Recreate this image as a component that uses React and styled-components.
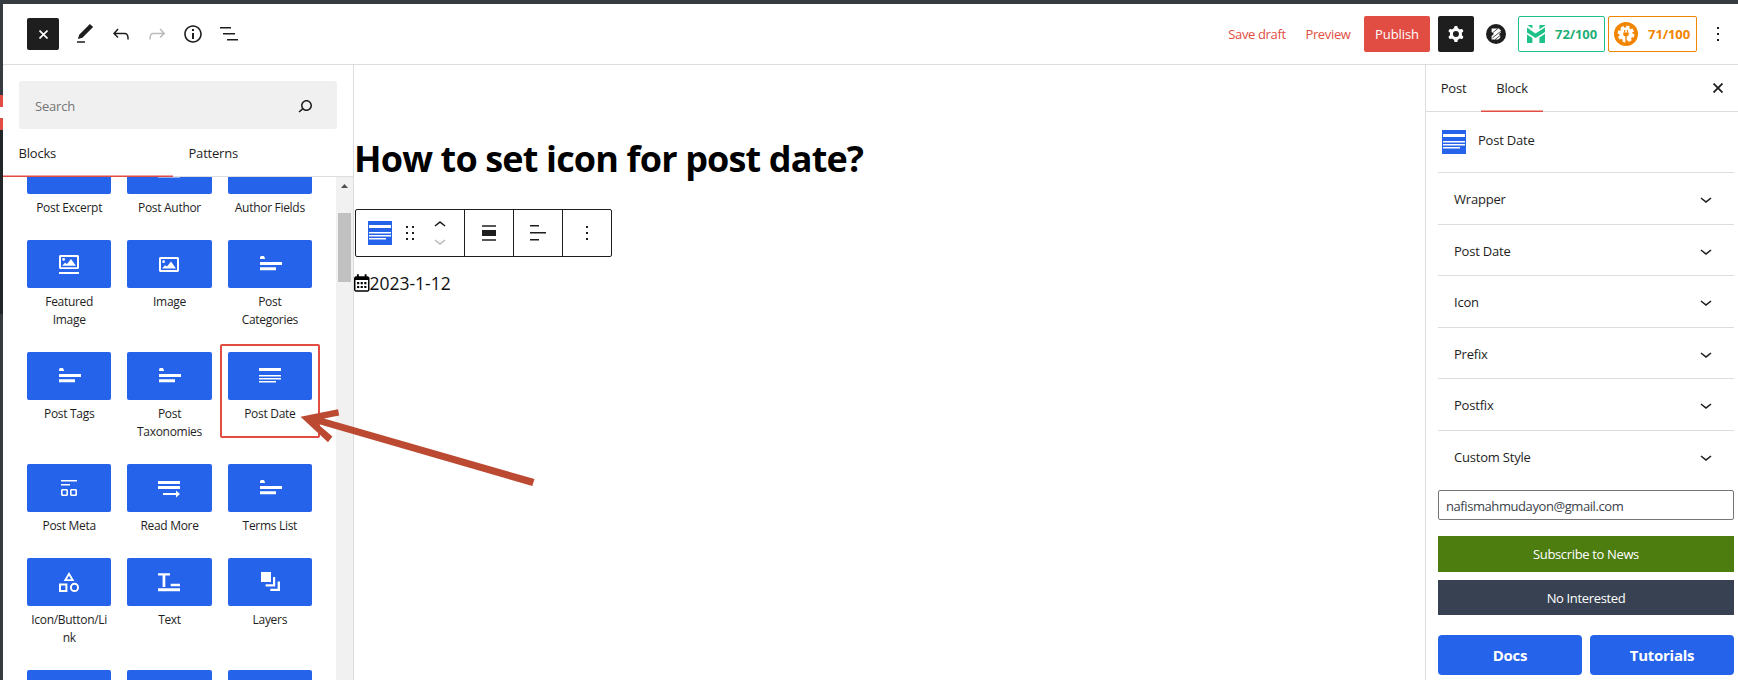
import React from "react";
import styled, { createGlobalStyle, css } from "styled-components";

const RED = "#e14d43";
const BLUE = "#2563eb";
const INK = "#1e1e1e";

const Global = createGlobalStyle`
  * { box-sizing: border-box; }
  body { margin: 0; background: #fff; overflow: hidden; }
  button, input { font: inherit; color: inherit; letter-spacing: inherit; border: 0; padding: 0; background: none; }
`;

const Screen = styled.div`
  position: relative;
  display: grid;
  grid-template: 4px 676px / 3px minmax(0, 1fr);
  width: 1738px;
  height: 680px;
  overflow: hidden;
  font: 13px/18px "Open Sans", "Noto Sans", sans-serif;
  letter-spacing: -0.2px;
  color: ${INK};
`;

const TopStrip = styled.div`
  grid-column: 1 / 3;
  background: #363b3f;
`;

const AdminStrip = styled.div`
  display: flex;
  flex-direction: column;
`;

const StripPart = styled.div`
  height: ${(p) => p.$h}px;
  background: ${(p) => p.$bg};
`;

const Editor = styled.div`
  display: flex;
  flex-direction: column;
  min-width: 0;
`;

const Header = styled.header`
  display: flex;
  justify-content: space-between;
  height: 61px;
  padding: 12px 5px 12px 24px;
  border-bottom: 1px solid #ddd;
`;

const HeaderGroup = styled.div`
  display: flex;
  align-items: center;
  height: 36px;
`;

const InserterToggle = styled.button`
  display: grid;
  place-items: center;
  width: 32px;
  height: 32px;
  margin-right: 8px;
  border-radius: 2px;
  background: ${INK};
  color: #fff;
`;

const IconButton = styled.button`
  display: grid;
  place-items: center;
  width: ${(p) => p.$w || 36}px;
  height: 36px;
  color: ${(p) => (p.$off ? "#bbb" : INK)};
`;

const TextButton = styled.button`
  width: ${(p) => p.$w}px;
  height: 36px;
  margin-right: ${(p) => p.$gap}px;
  color: ${RED};
  letter-spacing: -0.35px;
  text-align: center;
  white-space: nowrap;
`;

const Publish = styled(TextButton)`
  border-radius: 2px;
  background: ${RED};
  color: #fff;
  letter-spacing: -0.1px;
`;

const SettingsButton = styled(IconButton)`
  border-radius: 2px;
  background: ${INK};
  color: #fff;
`;

const Score = styled.div`
  display: flex;
  align-items: center;
  justify-content: space-between;
  width: ${(p) => p.$w}px;
  height: 36px;
  margin-right: ${(p) => p.$mr}px;
  padding: 0 ${(p) => p.$pr}px 0 ${(p) => p.$pl}px;
  border: 1px solid ${(p) => p.$c};
  border-radius: 2px;
  color: ${(p) => p.$text};
  font-weight: 700;
  letter-spacing: -0.1px;
`;

const Body = styled.div`
  display: flex;
  flex: 1;
  min-height: 0;
`;

const Inserter = styled.aside`
  display: flex;
  flex-direction: column;
  width: 351px;
  border-right: 1px solid #ddd;
`;

const SearchBox = styled.label`
  display: flex;
  align-items: center;
  justify-content: space-between;
  height: 48px;
  margin: 16px 16px 0;
  padding: 1px 20px 0 16px;
  border-radius: 2px;
  background: #f0f0f0;

  input { width: 180px; outline: 0; }
  input::placeholder { color: #757575; opacity: 1; }
`;

const InserterTabs = styled.div`
  display: flex;
  height: 48px;
  border-bottom: 1px solid #ddd;
`;

const InserterTab = styled.button`
  width: ${(p) => (p.$active ? 170 : 180)}px;
  height: 48px;
  padding: 1px 16px 1px 15.5px;
  text-align: left;
  box-shadow: ${(p) => (p.$active ? `inset 0 -1.5px ${RED}` : "none")};
`;

const BlockScroll = styled.div`
  display: flex;
  flex: 1;
  min-height: 0;
  overflow: hidden;
`;

const BlockGrid = styled.div`
  display: grid;
  grid-template-columns: repeat(3, 1fr);
  grid-auto-rows: max-content;
  align-items: start;
  align-content: start;
  width: 301px;
  margin: -39px 16px 0;
`;

const BlockItem = styled.div`
  display: flex;
  flex-direction: column;
  padding: 8px 8px 15px;
  border-radius: 2px;
  ${(p) => p.$selected && css`box-shadow: inset 0 0 0 2px ${RED};`}
`;

const Tile = styled.div`
  display: grid;
  place-items: center;
  height: 48px;
  border-radius: 2px;
  background: ${BLUE};
  color: #fff;
`;

const TileLabel = styled.div`
  margin: 5px 0 0;
  padding: 0 3px;
  font-size: 12px;
  line-height: 18px;
  letter-spacing: -0.3px;
  text-align: center;
  overflow-wrap: anywhere;
`;

const ScrollTrack = styled.div`
  display: flex;
  flex-direction: column;
  align-items: center;
  width: 17px;
  background: #f1f1f1;
  color: #505050;
`;

const ScrollThumb = styled.div`
  width: 13px;
  height: 69px;
  margin-top: 24px;
  background: #c1c1c1;
`;

const ScrollArrow = styled.svg`
  margin-top: 7px;
`;

const Canvas = styled.main`
  flex: 1;
  padding: 69px 0 0 1px;
`;

const Title = styled.h1`
  margin: 0 0 0 -1px;
  font-size: 36px;
  line-height: 50px;
  font-weight: 700;
  letter-spacing: -0.85px;
  color: #000;
  white-space: nowrap;
`;

const Toolbar = styled.div`
  display: flex;
  width: 257px;
  height: 48px;
  margin-top: 25px;
  border: 1px solid ${INK};
  border-radius: 2px;
`;

const ToolGroup = styled.div`
  display: flex;
  align-items: center;
  justify-content: ${(p) => (p.$pl ? "flex-start" : "center")};
  width: ${(p) => p.$w}px;
  padding-left: ${(p) => p.$pl || 0}px;
  border-right: ${(p) => (p.$last ? 0 : 1)}px solid ${INK};
`;

const BlockIcon = styled.span`
  display: grid;
  place-items: center;
  width: 24px;
  height: 24px;
  background: ${BLUE};
  color: #fff;
`;

const Movers = styled.div`
  display: flex;
  flex-direction: column;
  width: 24px;
  align-items: center;

  svg { margin: -4px 0; }
  svg + svg { color: #bbb; }
`;

const DateLine = styled.div`
  display: flex;
  align-items: center;
  height: 28px;
  margin: 12px 0 0 -1px;
  font-size: 17.5px;
  letter-spacing: -0.02px;
  color: #111;
`;

const Sidebar = styled.aside`
  width: 313px;
  border-left: 1px solid #ddd;
`;

const SidebarTabs = styled.div`
  display: flex;
  align-items: center;
  height: 47px;
  border-bottom: 1px solid #ddd;
`;

const SidebarTab = styled.button`
  width: ${(p) => p.$w}px;
  height: 48px;
  padding-bottom: 1px;
  letter-spacing: -0.2px;
  box-shadow: ${(p) => (p.$active ? `inset 0 -1.5px ${RED}` : "none")};
`;

const SidebarClose = styled(IconButton)`
  margin-left: auto;
  margin-right: 2px;
`;

const BlockCard = styled.div`
  display: flex;
  gap: 12px;
  padding: 18px 16px;
  line-height: 20px;
`;

const Panels = styled.div`
  padding: 0 4px 0 12px;
`;

const Panel = styled.button`
  display: flex;
  align-items: center;
  justify-content: space-between;
  width: 296px;
  height: 51.6px;
  padding: 1.6px 16px 0;
  border-top: 1px solid #ddd;
  text-align: left;
`;

const Email = styled.input`
  display: block;
  width: 296px;
  height: 30px;
  margin: 8.4px 0 16px;
  && { padding: 2px 7px 0; border: 1px solid #757575; }
  border-radius: 2px;
  && { color: #3c434a; letter-spacing: -0.42px; }
`;

const WideButton = styled.button`
  display: block;
  width: 296px;
  height: ${(p) => p.$h}px;
  margin-bottom: ${(p) => p.$mb}px;
  && { padding-top: 1px; background: ${(p) => p.$bg}; color: #fff; letter-spacing: -0.35px; font-weight: 500; }
`;

const LinkRow = styled.div`
  display: flex;
  gap: 8px;
`;

const LinkButton = styled.button`
  flex: 1;
  height: 40px;
  border-radius: 4px;
  && { padding-top: 1px; background: ${BLUE}; color: #fff; font-size: 15px; font-weight: 700; letter-spacing: -0.25px; }
`;

const Pointer = styled.svg`
  position: absolute;
  left: 296px;
  top: 400px;
  pointer-events: none;
`;

const Svg = ({ d, size = 24, children }) => (
  <svg width={size} height={size} viewBox="0 0 24 24" fill="currentColor" fillRule="evenodd">
    {d ? <path d={d} /> : children}
  </svg>
);

const Cross = ({ size = 9 }) => (
  <svg width={size} height={size} viewBox="0 0 9 9" stroke="currentColor" strokeWidth="1.6">
    <path d="M.5.5l8 8M8.5.5l-8 8" />
  </svg>
);

const paths = {
  pencil: "M20.1 5.1L16.9 2 6.2 12.7l-1.3 4.4 4.5-1.3L20.1 5.1zM4 20.8h8v-1.5H4v1.5z",
  undo: "M18.3 11.7c-.6-.6-1.4-.9-2.3-.9H6.7l2.9-3.3-1.1-1-4.5 5L8.5 16l1-1-2.7-2.7H16c.5 0 .9.2 1.3.5 1 1 1 3.4 1 4.5v.3h1.5v-.2c0-1.5 0-4.3-1.5-5.7z",
  redo: "M15.6 6.5l-1.1 1 2.9 3.3H8c-.9 0-1.7.3-2.3.9-1.4 1.5-1.4 4.2-1.4 5.6v.2h1.5v-.3c0-1.1 0-3.5 1-4.5.3-.3.7-.5 1.3-.5h9.2L14.5 15l1.1 1.1 4.6-4.6-4.6-5z",
  info: "M12 3.2c-4.8 0-8.8 3.9-8.8 8.8 0 4.8 3.9 8.8 8.8 8.8 4.8 0 8.8-3.9 8.8-8.8 0-4.8-4-8.8-8.8-8.8zm0 16c-4 0-7.2-3.3-7.2-7.2C4.8 8 8 4.8 12 4.8s7.2 3.3 7.2 7.2c0 4-3.2 7.2-7.2 7.2zM11 17h2v-6h-2v6zm0-8h2V7h-2v2z",
  list: "M3 5h11v1.6H3zM6 11h12v1.6H6zM10 17h11v1.6H10z",
  search: "M13.5 6C10.5 6 8 8.5 8 11.5c0 1.1.3 2.1.9 3l-3.4 3 1 1.1 3.4-2.9c1 .9 2.2 1.4 3.6 1.4 3 0 5.5-2.5 5.5-5.5C19 8.5 16.5 6 13.5 6zm0 9.5c-2.2 0-4-1.8-4-4s1.8-4 4-4 4 1.8 4 4-1.8 4-4 4z",
  down: "M17.5 11.6L12 16l-5.5-4.4.9-1.2L12 14l4.5-3.6 1 1.2z",
  up: "M6.5 12.4L12 8l5.5 4.4-.9 1.2L12 10l-4.5 3.6-1-1.2z",
  cog: "M10.289 4.836A1 1 0 0111.275 4h1.306a1 1 0 01.987.836l.244 1.466c.787.26 1.503.679 2.108 1.218l1.393-.522a1 1 0 011.216.437l.653 1.13a1 1 0 01-.23 1.273l-1.148.944a6.025 6.025 0 010 2.435l1.149.946a1 1 0 01.23 1.272l-.653 1.13a1 1 0 01-1.216.437l-1.394-.522c-.605.54-1.32.958-2.108 1.218l-.244 1.466a1 1 0 01-.987.836h-1.306a1 1 0 01-.986-.836l-.244-1.466a5.995 5.995 0 01-2.108-1.218l-1.394.522a1 1 0 01-1.217-.436l-.653-1.131a1 1 0 01.23-1.272l1.149-.946a6.026 6.026 0 010-2.435l-1.148-.944a1 1 0 01-.23-1.272l.653-1.131a1 1 0 011.217-.437l1.393.522a5.994 5.994 0 012.108-1.218l.244-1.466zM14.929 12a3 3 0 11-6 0 3 3 0 016 0z",
  drag: "M8 7h2V5H8v2zm0 6h2v-2H8v2zm0 6h2v-2H8v2zm6-14v2h2V5h-2zm0 8h2v-2h-2v2zm0 6h2v-2h-2v2z",
  more: "M13 19h-2v-2h2v2zm0-6h-2v-2h2v2zm0-6h-2V5h2v2z",
  alignNone: "M5 15h14V9H5v6zm0 4.8h14v-1.5H5v1.5zM5 4.2v1.5h14V4.2H5z",
  alignLeft: "M13 5.5H4V4h9v1.5zm7 7H4V11h16v1.5zm-7 7H4V18h9v1.5z",
  terms: "M2 7V5l1.2-1H6l1.2 3zM2 10h22v3H2zM2 15.2h16v3H2z",
  lines: "M1 4h22v3H1zM1 11h22v1.6H1zM1 14h22v1.6H1zM1 17h17v1.6H1z",
  featured: "M3 3h18l1 1v12l-1 1H3l-1-1V4zM4 5v10.3h16V5zM5 13.8l3-3 2 1.3 4-5 5 6.7zM5.2 7.4a1.4 1.4 0 112.8 0 1.4 1.4 0 01-2.8 0zM2 20h20v2H2z",
  image: "M3 5h18l1 1v13l-1 1H3l-1-1V6zM4 7v11h16V7zM5 16.6l3-3.4 2 1.4 4-5 5 7zM5.2 9.7a1.4 1.4 0 112.8 0 1.4 1.4 0 01-2.8 0z",
  meta: "M4 4h16v1.4H4zM4 8h9v1.6H4zM5 13h5l1 1v5l-1 1H5l-1-1v-5zM5.6 14.6v3.8h3.8v-3.8zM14 13h5l1 1v5l-1 1h-5l-1-1v-5zM14.6 14.6v3.8h3.8v-3.8z",
  readMore: "M1 5h22v3H1zM1 10h22v3H1zM6 17h13v-2.5l4 3.5-4 3.5V19H6z",
  shapes: "M12 2l5.3 9H6.7zM12 5.8L9.9 9.2h4.2zM2 13.5h8.4v8.4H2zM4 15.5v4.4h4.4v-4.4zM12.9 17.4a4.6 4.6 0 119.2 0 4.6 4.6 0 01-9.2 0zM14.9 17.4a2.6 2.6 0 105.2 0 2.6 2.6 0 00-5.2 0z",
  text: "M1 3.3h12v2.2H8.3V17H5.6V5.5H1zM13.7 13.8H23v2.4h-9.3zM1 18.2h22v3H1z",
  layers: "M3 2h10v10H3zM15 7h2.2v9.4H7.6v-2.2H15zM19.6 11.4H22V21H12.3v-2.2h7.3z",
  author: "M1 14h22v2H1zM1 18h22v1.6H1z",
  blank: "M0 0",
};

const blocks = [
  ["Post Excerpt", "blank"],
  ["Post Author", "author"],
  ["Author Fields", "blank"],
  ["Featured Image", "featured"],
  ["Image", "image"],
  ["Post Categories", "terms"],
  ["Post Tags", "terms"],
  ["Post Taxonomies", "terms"],
  ["Post Date", "lines", true],
  ["Post Meta", "meta"],
  ["Read More", "readMore"],
  ["Terms List", "terms"],
  ["Icon/Button/Link", "shapes"],
  ["Text", "text"],
  ["Layers", "layers"],
  ["", "blank"],
  ["", "blank"],
  ["", "blank"],
];

const panels = ["Wrapper", "Post Date", "Icon", "Prefix", "Postfix", "Custom Style"];

const BuilderLogo = () => (
  <svg width="20" height="20" viewBox="0 0 20 20">
    <circle cx="10" cy="10" r="10" fill={INK} />
    <path d="M5.6 4.6h7.2l2 1.6v2.2L13 10l1.2 1.5v2.2l-2.2 1.8H5.6v-3.4L8 10 5.6 8z" fill="#fff" />
    <path d="M6.4 9L12 4.4M6.4 14l8.2-6.6M9 15.6l5-4" stroke={INK} strokeWidth="0.8" />
  </svg>
);

const SeoLogo = () => (
  <svg width="18" height="18" viewBox="0 0 18 18" fill="#1fc286">
    <path d="M.4 0h5v3.4zM0 2.4l8.4 6L18 2.4V7l-9.4 6L0 7.6zM0 9.6l5.4 3.5V18H0zM12.4 12.4L18 8.8V18h-5.6zM12.4 0H18v.8l-5.6 3.4z" />
  </svg>
);

const PluginLogo = () => (
  <svg width="24" height="24" viewBox="0 0 24 24">
    <circle cx="12" cy="12" r="12" fill="#f18500" />
    <circle cx="12" cy="12" r="6.8" fill="#fff" />
    <circle cx="12" cy="12" r="7.2" fill="none" stroke="#fff" strokeWidth="2.4" strokeDasharray="3.3 2.355" />
    <path d="M10.6 8v2.4M13.4 8v2.4" stroke="#f18500" strokeWidth="1.1" />
    <path d="M9.2 10.4h5.6v1.5a2.4 2.4 0 01-2.1 2.4V20h-1.4v-5.7a2.4 2.4 0 01-2.1-2.4z" fill="#f18500" />
  </svg>
);

const CalendarIcon = () => (
  <svg width="15.5" height="18" viewBox="0 0 16 18" fill="#000" fillRule="evenodd">
    <path d="M3 0h2v2h6V0h2v2h1.5L16 3.5v13L14.5 18h-13L0 16.5v-13L1.5 2H3zM1.5 6v10.5h13V6zM3.2 8h2.2v2.2H3.2zM6.9 8h2.2v2.2H6.9zM10.6 8h2.2v2.2h-2.2zM3.2 12h2.2v2.2H3.2zM6.9 12h2.2v2.2H6.9zM10.6 12h2.2v2.2h-2.2z" />
  </svg>
);

export default function App() {
  return (
    <Screen>
      <Global />
      <TopStrip />
      <AdminStrip>
        <StripPart $h={91} $bg="#363b3f" />
        <StripPart $h={12} $bg={RED} />
        <StripPart $h={11} $bg="#fff" />
        <StripPart $h={12} $bg={RED} />
        <StripPart $h={184} $bg="#222527" />
        <StripPart $h={366} $bg="#363b3f" />
      </AdminStrip>
      <Editor>
        <Header>
          <HeaderGroup>
            <InserterToggle><Cross size={9} /></InserterToggle>
            <IconButton><Svg d={paths.pencil} /></IconButton>
            <IconButton><Svg d={paths.undo} /></IconButton>
            <IconButton $off><Svg d={paths.redo} /></IconButton>
            <IconButton><Svg d={paths.info} /></IconButton>
            <IconButton><Svg d={paths.list} /></IconButton>
          </HeaderGroup>
          <HeaderGroup>
            <TextButton $w={70} $gap={7}>Save draft</TextButton>
            <TextButton $w={58} $gap={7}>Preview</TextButton>
            <Publish $w={66} $gap={8}>Publish</Publish>
            <SettingsButton><Svg d={paths.cog} /></SettingsButton>
            <IconButton $w={44}><BuilderLogo /></IconButton>
            <Score $w={87} $mr={3} $pl={8} $pr={7} $c="#1fc286" $text="#1faf76"><SeoLogo />72/100</Score>
            <Score $w={89} $mr={5} $pl={5} $pr={6} $c="#f18500" $text="#f18500"><PluginLogo />71/100</Score>
            <IconButton $w={31}><Svg d={paths.more} /></IconButton>
          </HeaderGroup>
        </Header>
        <Body>
          <Inserter>
            <SearchBox>
              <input placeholder="Search" />
              <Svg d={paths.search} />
            </SearchBox>
            <InserterTabs>
              <InserterTab $active>Blocks</InserterTab>
              <InserterTab>Patterns</InserterTab>
            </InserterTabs>
            <BlockScroll>
              <BlockGrid>
                {blocks.map(([name, icon, selected], i) => (
                  <BlockItem key={i} $selected={selected}>
                    <Tile><Svg d={paths[icon]} /></Tile>
                    <TileLabel>{name}</TileLabel>
                  </BlockItem>
                ))}
              </BlockGrid>
              <ScrollTrack>
                <ScrollArrow width="7" height="5" viewBox="0 0 7 5" fill="currentColor">
                  <path d="M3.5 0L7 4H0z" />
                </ScrollArrow>
                <ScrollThumb />
              </ScrollTrack>
            </BlockScroll>
          </Inserter>
          <Canvas>
            <Title>How to set icon for post date?</Title>
            <Toolbar>
              <ToolGroup $w={109} $pl={12}>
                <BlockIcon><Svg d={paths.lines} /></BlockIcon>
                <IconButton><Svg d={paths.drag} /></IconButton>
                <Movers>
                  <Svg d={paths.up} />
                  <Svg d={paths.down} />
                </Movers>
              </ToolGroup>
              <ToolGroup $w={49}><Svg d={paths.alignNone} /></ToolGroup>
              <ToolGroup $w={49}><Svg d={paths.alignLeft} /></ToolGroup>
              <ToolGroup $w={48} $last><Svg d={paths.more} /></ToolGroup>
            </Toolbar>
            <DateLine><CalendarIcon />2023-1-12</DateLine>
          </Canvas>
          <Sidebar>
            <SidebarTabs>
              <SidebarTab $w={55}>Post</SidebarTab>
              <SidebarTab $w={62} $active>Block</SidebarTab>
              <SidebarClose><Cross size={10} /></SidebarClose>
            </SidebarTabs>
            <BlockCard>
              <BlockIcon><Svg d={paths.lines} /></BlockIcon>
              Post Date
            </BlockCard>
            <Panels>
              {panels.map((name) => (
                <Panel key={name}>{name}<Svg d={paths.down} /></Panel>
              ))}
              <Email defaultValue="nafismahmudayon@gmail.com" />
              <WideButton $h={36} $mb={8} $bg="#4d7c0f">Subscribe to News</WideButton>
              <WideButton $h={35} $mb={20} $bg="#374151">No Interested</WideButton>
              <LinkRow>
                <LinkButton>Docs</LinkButton>
                <LinkButton>Tutorials</LinkButton>
              </LinkRow>
            </Panels>
          </Sidebar>
        </Body>
      </Editor>
      <Pointer width="244" height="92" viewBox="296 400 244 92" fill="#bc4a32">
        <path d="M300.5 416.7L338 409.2L339.2 415.4L324 418.6L534.5 479L532.3 486L317.5 423.8L332.4 436.6L328 442.2Z" />
      </Pointer>
    </Screen>
  );
}
